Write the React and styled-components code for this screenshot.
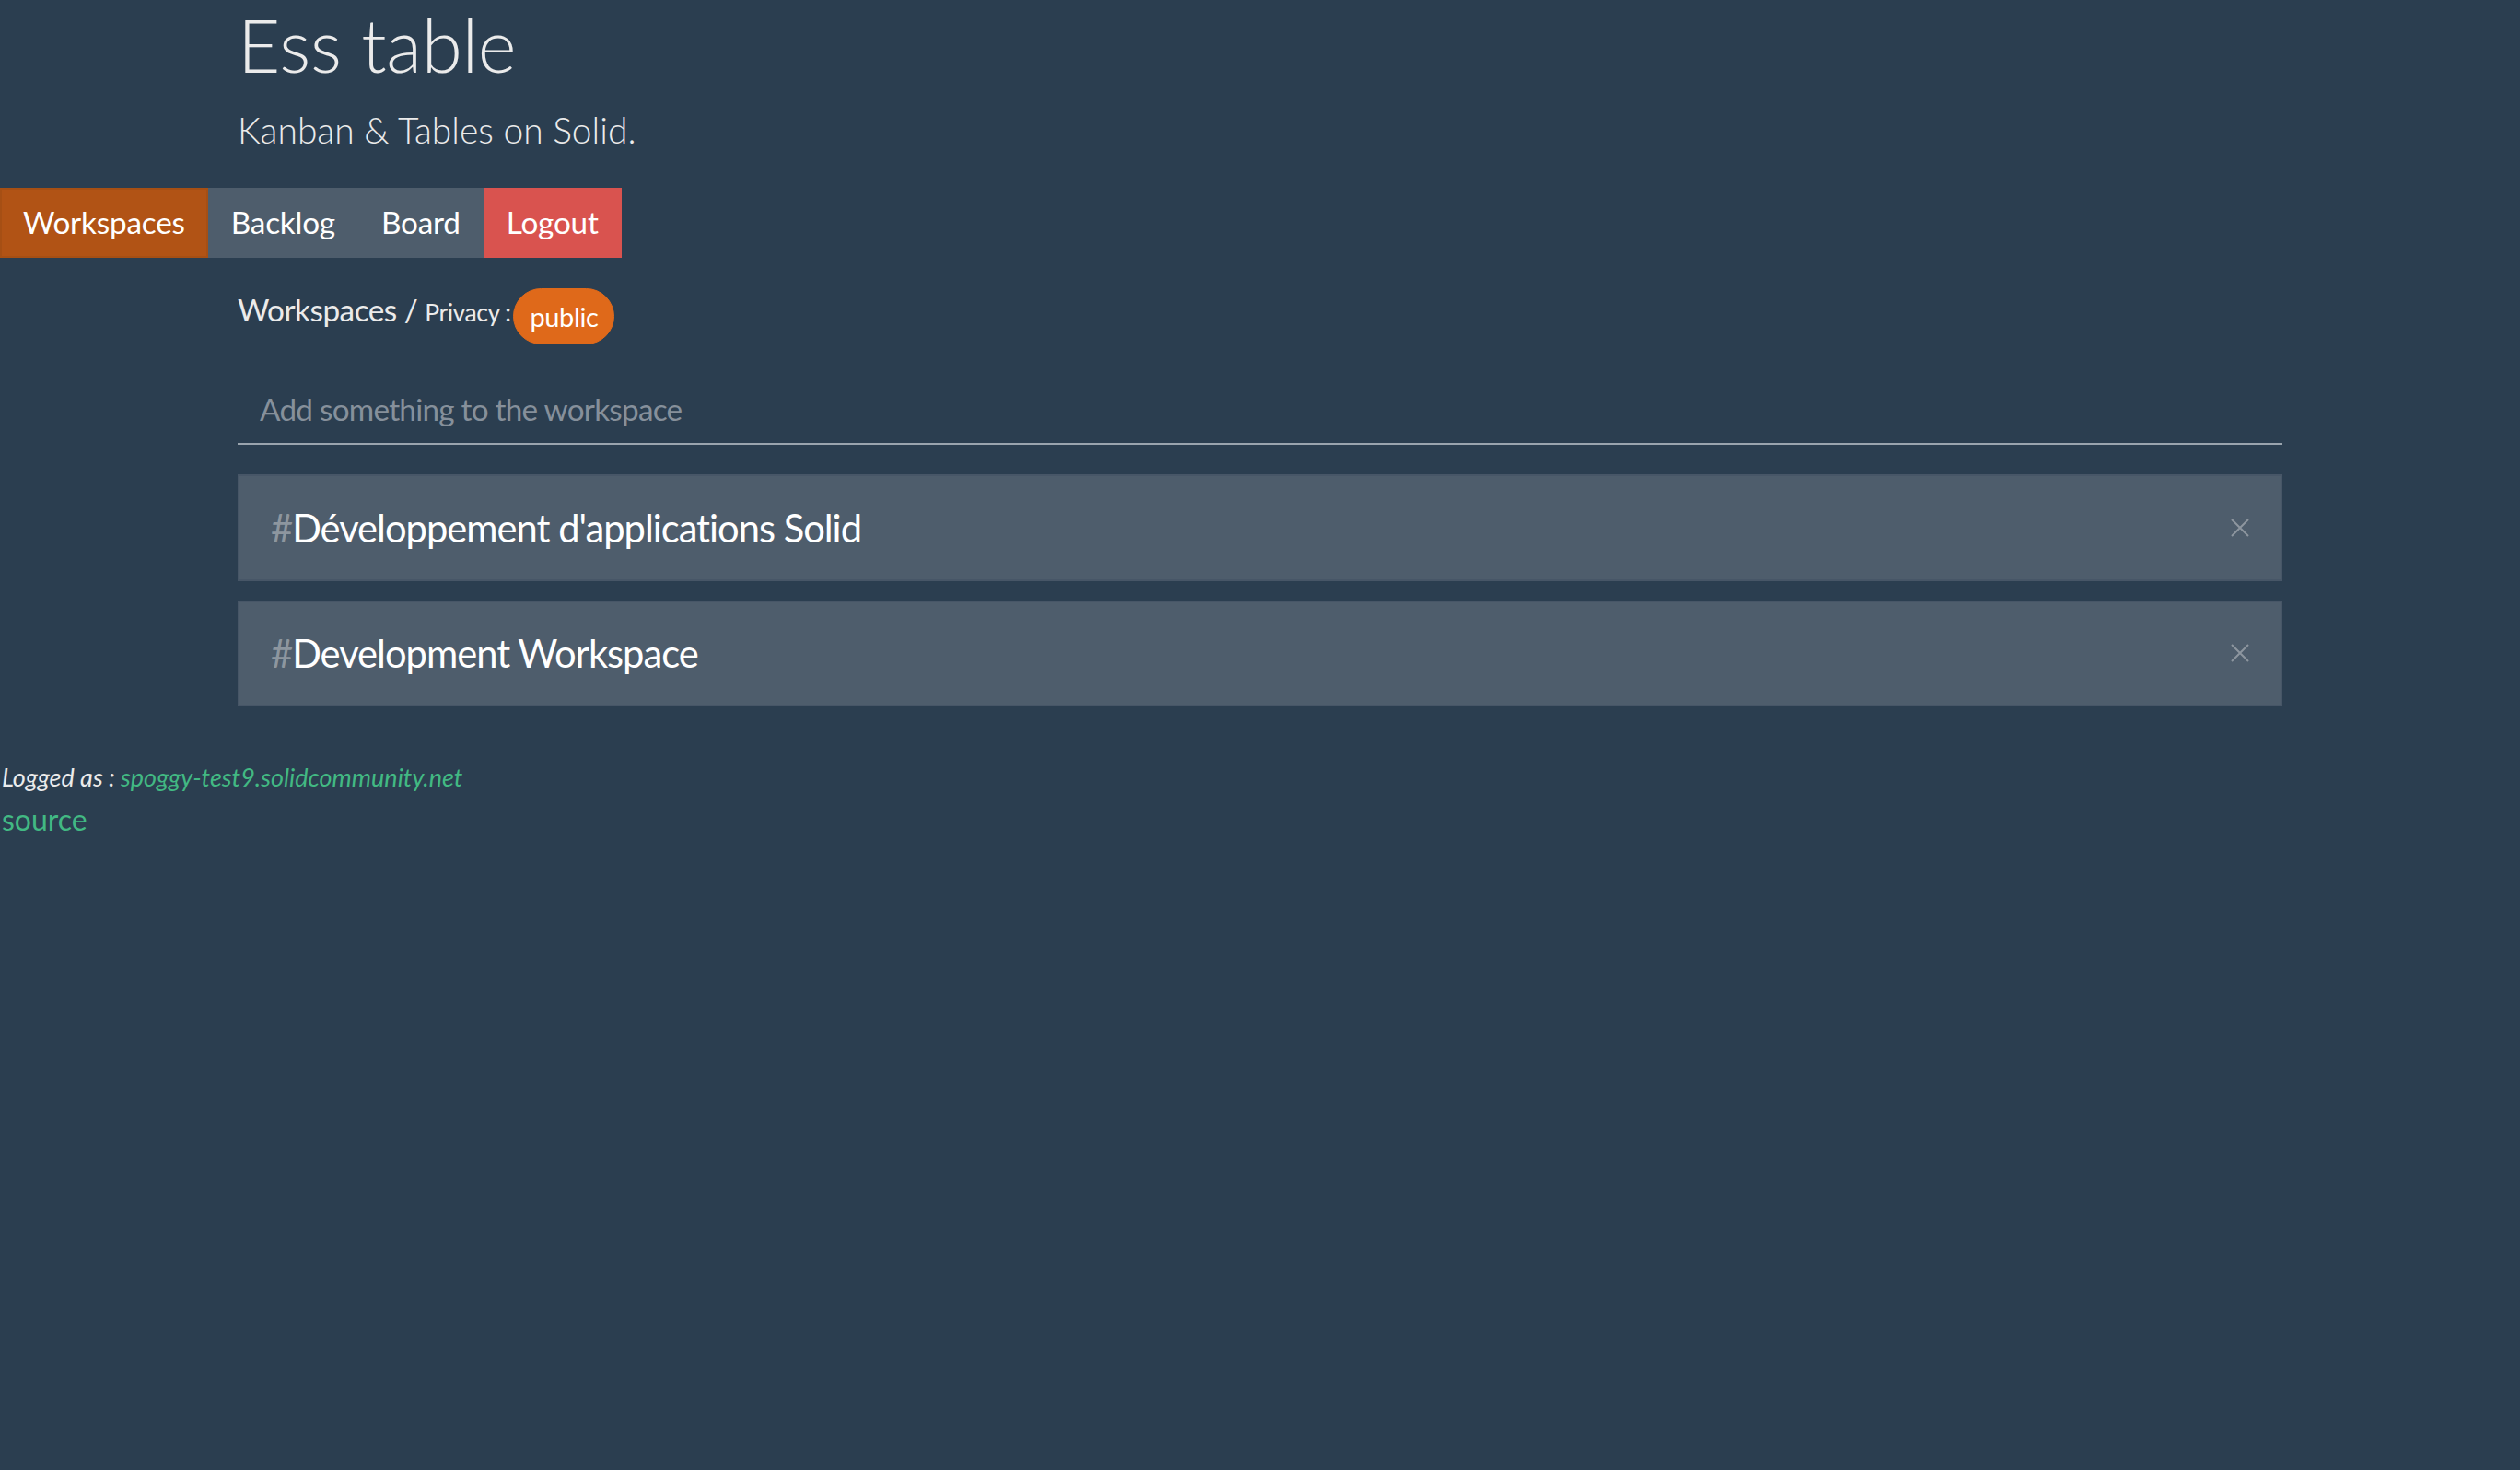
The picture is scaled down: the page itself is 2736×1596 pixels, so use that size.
import React from 'react'
import styled, {createGlobalStyle} from 'styled-components'

const GlobalStyle = createGlobalStyle`
  html, body {
    margin: 0;
    padding: 0;
    background: #2b3e50;
  }
  body {
    font-family: Lato, "Open Sans", sans-serif;
    font-size: 33.3px;
    line-height: 1.5;
    color: #ebebeb;
    min-height: 1596px;
    font-variant-ligatures: none;
  }
`

const Page = styled.div`
  min-height: 1596px;
  background: #2b3e50;
`
const Container = styled.div`
  width: 2220px;
  margin: 0 auto;
`
const Title = styled.h1`
  margin: 0 0 16px;
  font-size: 80px;
  font-weight: 300;
  line-height: 1.2;
  letter-spacing: -0.3px;
  color: #ebebeb;
`
const Lead = styled.p`
  margin: 0 0 33px;
  font-size: 39px;
  font-weight: 300;
  line-height: 1.5;
  color: #ebebeb;
`
const Nav = styled.nav`
  display: flex;
`
const NavButton = styled.a`
  display: block;
  padding: 12.5px 25px;
  font-size: 33.3px;
  line-height: 51px;
  letter-spacing: -0.2px;
  color: #fff;
  text-decoration: none;
  background: ${p => p.$active ? '#b15315' : p.$danger ? '#d9534f' : '#4e5d6c'};
  box-shadow: ${p => p.$active ? 'inset 0 0 0 2px #a64f14' : 'none'};
`
const Crumbs = styled.div`
  display: flex;
  align-items: flex-start;
  margin-top: 31px;
`
const CrumbText = styled.span`
  font-size: 33.3px;
  line-height: 50px;
  letter-spacing: -0.5px;
  white-space: pre;
  small {
    font-size: 26.6px;
  }
`
const Pill = styled.button`
  margin: 2px 0 0 3px;
  padding: 8px 17px;
  font-family: inherit;
  font-size: 29px;
  line-height: 43.5px;
  letter-spacing: -0.4px;
  color: #fff;
  background: #df691a;
  border: 1px solid #df691a;
  border-radius: 40px;
`
const AddInput = styled.input`
  display: block;
  box-sizing: border-box;
  width: 100%;
  height: 77px;
  margin-top: 32px;
  padding: 12.5px 24px;
  font-family: inherit;
  font-size: 33.3px;
  line-height: 50px;
  letter-spacing: -0.75px;
  color: #ebebeb;
  background: transparent;
  border: none;
  border-bottom: 2px solid #9aa4ae;
  outline: none;
  &::placeholder {
    color: #86909b;
  }
`
const List = styled.div`
  display: flex;
  flex-direction: column;
  gap: 21px;
  margin-top: 32px;
`
const Item = styled.div`
  display: flex;
  align-items: center;
  justify-content: space-between;
  padding: 24.5px 34px;
  font-size: 41.7px;
  line-height: 62.5px;
  letter-spacing: -1px;
  color: #fff;
  background: #4e5d6c;
  border: 2px solid #475667;
`
const Hash = styled.span`
  color: #8d969f;
`
const CloseBtn = styled.span`
  display: flex;
  color: #8d969f;
`
const Footer = styled.div`
  padding: 57px 0 0 2px;
`
const Logged = styled.div`
  font-size: 27px;
  font-style: italic;
  line-height: 40px;
`
const Link = styled.a`
  color: #42b983;
  text-decoration: none;
`
const Source = styled.div`
  margin-top: 2px;
  font-size: 32px;
  line-height: 48px;
`

const CloseIcon = () => (
  <svg width="20" height="20" viewBox="0 0 20 20">
    <path d="M1 1L19 19M19 1L1 19" stroke="currentColor" strokeWidth="2"/>
  </svg>
)

const workspaces = ["Développement d'applications Solid", 'Development Workspace']

export default () => (
  <Page>
    <GlobalStyle/>
    <Container>
      <Title>Ess table</Title>
      <Lead>Kanban &amp; Tables on Solid.</Lead>
    </Container>
    <Nav>
      <NavButton $active>Workspaces</NavButton>
      <NavButton>Backlog</NavButton>
      <NavButton>Board</NavButton>
      <NavButton $danger>Logout</NavButton>
    </Nav>
    <Container>
      <Crumbs>
        <CrumbText>Workspaces / <small>Privacy :</small></CrumbText>
        <Pill>public</Pill>
      </Crumbs>
      <AddInput placeholder="Add something to the workspace"/>
      <List>
        {workspaces.map(name =>
          <Item key={name}>
            <span><Hash>#</Hash>{name}</span>
            <CloseBtn><CloseIcon/></CloseBtn>
          </Item>
        )}
      </List>
    </Container>
    <Footer>
      <Logged>Logged as : <Link>spoggy-test9.solidcommunity.net</Link></Logged>
      <Source><Link>source</Link></Source>
    </Footer>
  </Page>
)
